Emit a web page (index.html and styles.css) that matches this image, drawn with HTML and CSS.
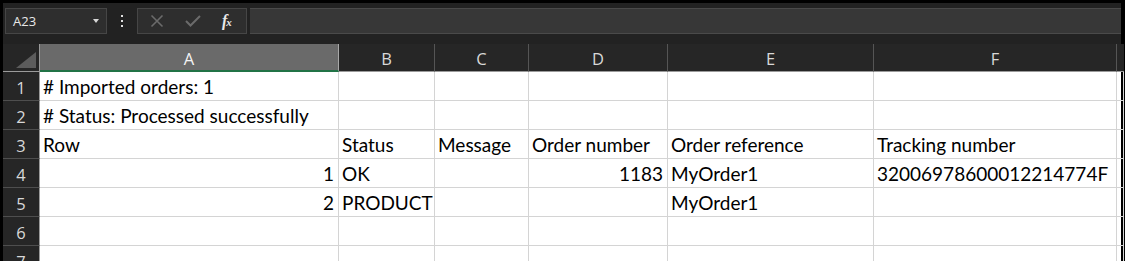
FILE: index.html
```html
<!DOCTYPE html>
<html>
<head>
<meta charset="utf-8">
<link rel="stylesheet" href="styles.css">
</head>
<body>
<div class="frame">
  <div class="toolbar">
    <div class="namebox"><span class="nb-text">A23</span><span class="caret"></span></div>
    <div class="more"><span></span><span></span><span></span></div>
    <div class="fbtns">
      <svg class="ic" width="14" height="14" viewBox="0 0 14 14"><path d="M1.5 1.5 L12.5 12.5 M12.5 1.5 L1.5 12.5" stroke="#6b6b6b" stroke-width="1.6" fill="none"/></svg>
      <svg class="ic" width="16" height="12" viewBox="0 0 16 12"><path d="M1 6 L5.5 10.5 L15 1" stroke="#6b6b6b" stroke-width="2" fill="none"/></svg>
      <span class="fx"><span class="fx-f">f</span><span class="fx-x">x</span></span>
    </div>
    <div class="finput"></div>
  </div>
  <div class="sheet">
    <div class="corner"><span class="tri"></span></div>
    <div class="ch sel">A</div>
    <div class="ch">B</div>
    <div class="ch">C</div>
    <div class="ch">D</div>
    <div class="ch">E</div>
    <div class="ch">F</div>
    <div class="ch last"></div>

    <div class="rh">1</div>
    <div class="c"># Imported orders: 1</div><div class="c"></div><div class="c"></div><div class="c"></div><div class="c"></div><div class="c"></div><div class="c"></div>

    <div class="rh">2</div>
    <div class="c"># Status: Processed successfully</div><div class="c"></div><div class="c"></div><div class="c"></div><div class="c"></div><div class="c"></div><div class="c"></div>

    <div class="rh">3</div>
    <div class="c">Row</div><div class="c">Status</div><div class="c">Message</div><div class="c">Order number</div><div class="c">Order reference</div><div class="c">Tracking number</div><div class="c"></div>

    <div class="rh">4</div>
    <div class="c num">1</div><div class="c">OK</div><div class="c"></div><div class="c num">1183</div><div class="c">MyOrder1</div><div class="c">32006978600012214774F</div><div class="c"></div>

    <div class="rh">5</div>
    <div class="c num">2</div><div class="c">PRODUCT</div><div class="c"></div><div class="c"></div><div class="c">MyOrder1</div><div class="c"></div><div class="c"></div>

    <div class="rh">6</div>
    <div class="c"></div><div class="c"></div><div class="c"></div><div class="c"></div><div class="c"></div><div class="c"></div><div class="c"></div>

    <div class="rh">7</div>
    <div class="c"></div><div class="c"></div><div class="c"></div><div class="c"></div><div class="c"></div><div class="c"></div><div class="c"></div>
  </div>
</div>
</body>
</html>
```
FILE: styles.css
```css
* { box-sizing: border-box; }
html, body { margin: 0; padding: 0; background: #000; }
.frame {
  width: 1125px;
  height: 261px;
  padding: 3px 4px 4px 3px;
  background: #000;
  overflow: hidden;
}
.toolbar {
  height: 41px;
  background: #222222;
  display: flex;
  align-items: flex-start;
  padding: 5px 0 0 2px;
}
.namebox {
  width: 102px;
  height: 26px;
  background: #2e2e2e;
  border: 1px solid #464646;
  display: flex;
  align-items: center;
  justify-content: space-between;
  padding: 0 7px 0 7px;
  font-family: "Open Sans", "Noto Sans", sans-serif;
  font-size: 13px;
  color: #e8e8e8;
}
.caret {
  width: 0; height: 0;
  border-left: 3.5px solid transparent;
  border-right: 3.5px solid transparent;
  border-top: 4px solid #d8d8d8;
}
.more {
  width: 30px;
  height: 26px;
  display: flex;
  flex-direction: column;
  align-items: center;
  justify-content: center;
  gap: 3px;
}
.more span { width: 2px; height: 2px; background: #e0e0e0; }
.fbtns {
  width: 110px;
  height: 26px;
  background: #2e2e2e;
  border: 1px solid #464646;
  display: flex;
  align-items: center;
  padding-left: 12px;
  gap: 21px;
}
.fx {
  font-family: "Liberation Serif", serif;
  font-style: italic;
  color: #e8e8e8;
  font-size: 16px;
  line-height: 1;
}
.fx-f { font-weight: bold; }
.fx-x { font-size: 11px; font-weight: bold; margin-left: -1px; }
.finput {
  flex: 1;
  margin-left: 3px;
  height: 26px;
  background: #373737;
  border-top: 1px solid #4a4a4a;
  border-bottom: 1px solid #4a4a4a;
}
.sheet {
  display: grid;
  grid-template-columns: 37px 299px 96px 94px 139px 206px 243px 1fr;
  grid-template-rows: 28px repeat(7, 29px);
  background: #fff;
}
.corner {
  background: #262626;
  border-right: 1px solid #9b9b9b;
  border-bottom: 1px solid #9b9b9b;
  position: relative;
}
.tri {
  position: absolute;
  right: 3px;
  bottom: 3px;
  width: 0; height: 0;
  border-left: 20px solid transparent;
  border-bottom: 16px solid #5c5c5c;
}
.ch {
  background: #262626;
  border-right: 1px solid #555;
  border-bottom: 1px solid #9b9b9b;
  color: #d8d8d8;
  font-family: "Open Sans", "Noto Sans", sans-serif;
  font-size: 16.5px;
  display: flex;
  align-items: center;
  justify-content: center;
  padding-top: 1px;
}
.ch.sel {
  background: #6a6a6a;
  color: #f4f4f4;
  border-right: 1px solid #a8a8a8;
  border-bottom: 2px solid #217346;
  padding-top: 2px;
}
.ch.last { border-right: none; }
.rh {
  background: #262626;
  border-right: 1px solid #9b9b9b;
  border-bottom: 1px solid #4e4e4e;
  color: #d8d8d8;
  font-family: "Open Sans", "Noto Sans", sans-serif;
  font-size: 16.5px;
  display: flex;
  justify-content: center;
  align-items: center;
  padding-top: 2px;
}
.c {
  border-right: 1px solid #d4d4d4;
  border-bottom: 1px solid #d4d4d4;
  font-family: Lato, "Liberation Sans", sans-serif;
  font-size: 19px;
  color: #000;
  line-height: 26px;
  padding: 2px 3px 0 3px;
  white-space: nowrap;
  overflow: visible;
}
.c.num { text-align: right; padding-right: 4px; }
```
